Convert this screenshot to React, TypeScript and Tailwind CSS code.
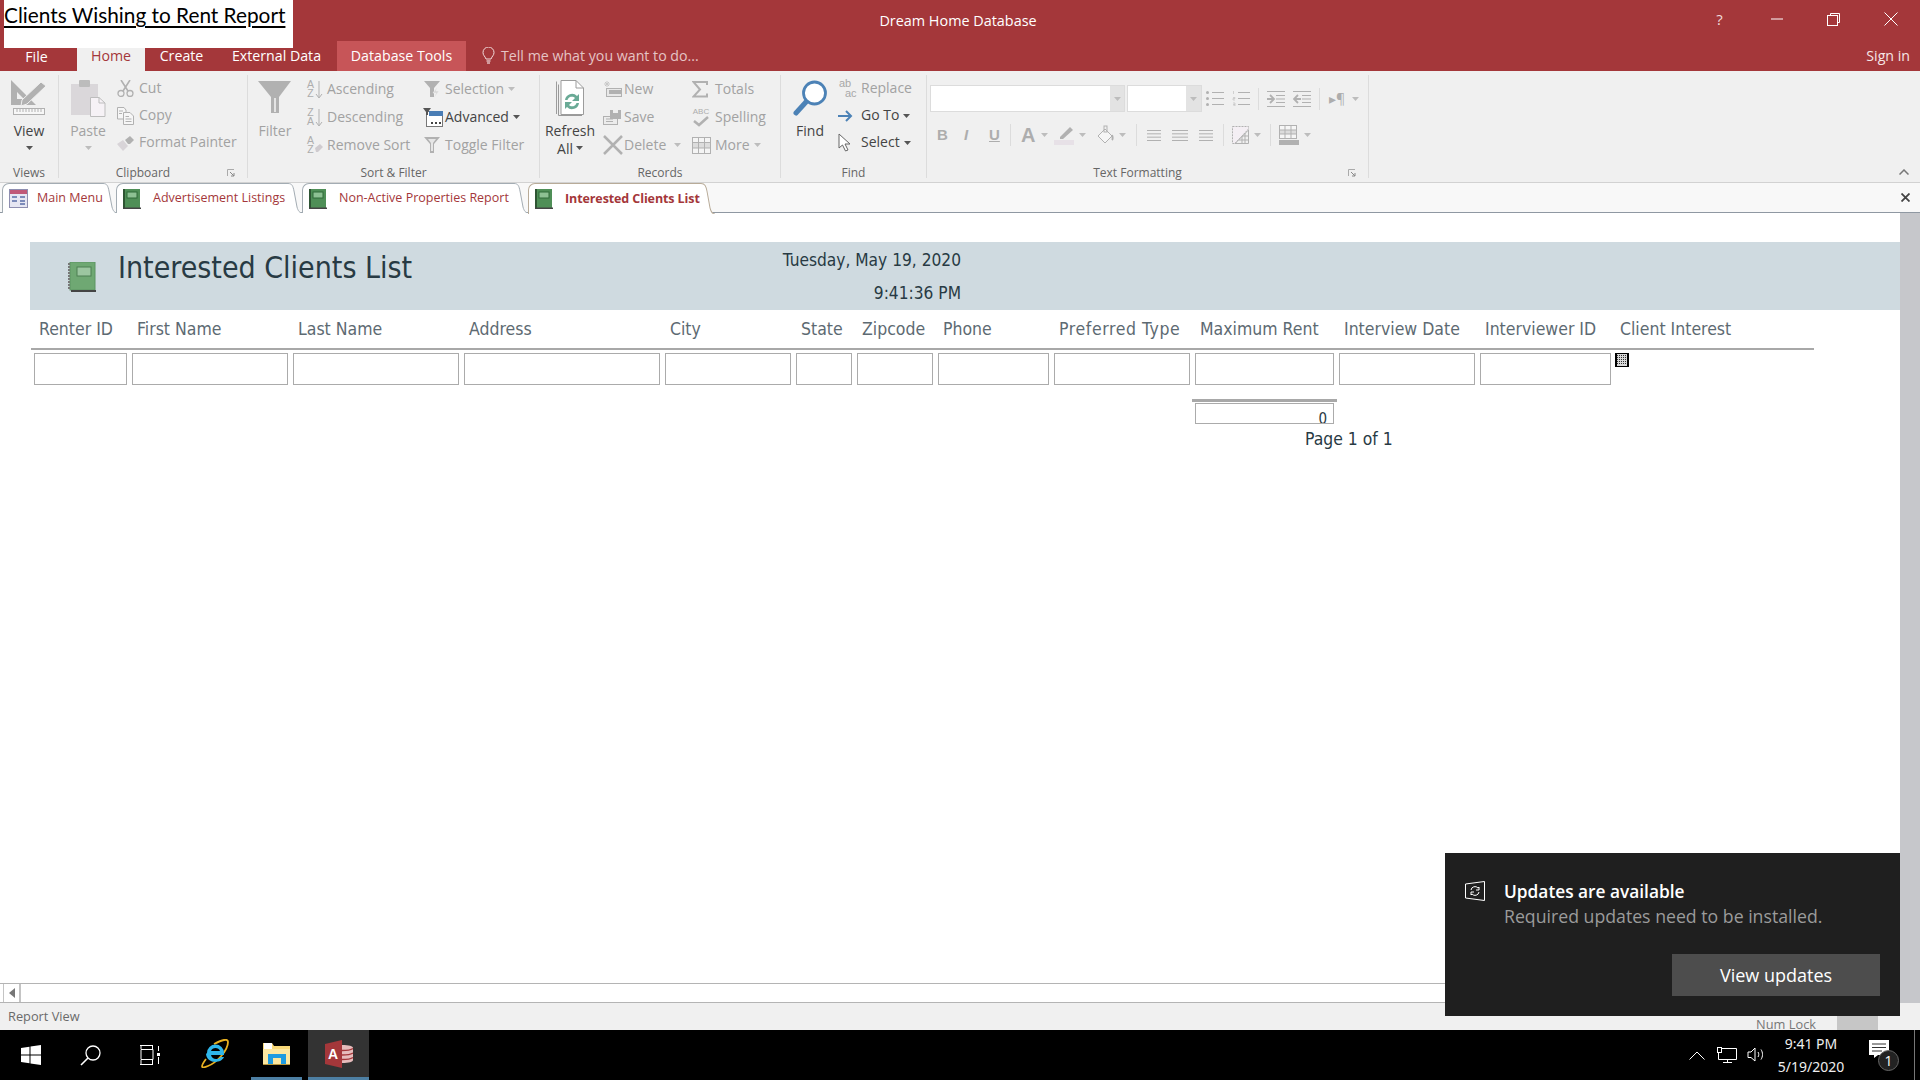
import React from "react";

const UI = "font-['Open_Sans','Noto_Sans',sans-serif]";
const RPT = "font-['DejaVu_Sans_Condensed','DejaVu_Sans',sans-serif]";
const G = "#b1b1b1";

type SP = { w: number; h: number; children: React.ReactNode; cls?: string };
const Svg = ({ w, h, children, cls }: SP) => (
  <svg width={w} height={h} viewBox={`0 0 ${w} ${h}`} fill="none" className={cls ?? "block shrink-0"}>
    {children}
  </svg>
);

const Caret = ({ dark, cls }: { dark?: boolean; cls?: string }) => (
  <Svg w={7} h={4} cls={cls ?? "block shrink-0"}>
    <path d="M0 0H7L3.500 4Z" fill={dark ? "#555" : "#bdbdbd"} />
  </Svg>
);

const ViewIcon = () => (
  <Svg w={38} h={38} cls="block shrink-0 -mt-[2px]">
    <path d="M1 2V27H26Z M7 14V21H14Z" fill={G} fillRule="evenodd" />
    <path d="M12 22L31 4L36 8L17 26L11 28Z" fill={G} stroke="#f0f0f0" />
    <rect x="3.500" y="30.500" width="31" height="6" stroke={G} fill="#f7f7f7" />
    <path d="M7 31v3M10 31v3M13 31v3M16 31v3M19 31v3M22 31v3M25 31v3M28 31v3M31 31v3" stroke={G} />
  </Svg>
);
const PasteIcon = () => (
  <Svg w={36} h={38} cls="block shrink-0 -mt-[1px]">
    <rect x="1" y="5" width="27" height="31" fill="#dad7da" />
    <rect x="9" y="1" width="11" height="7" rx="1" fill="#bcbcbc" />
    <path d="M20.500 18.500H29L35 24V37.500H20.500Z" fill="#f6f2f6" stroke="#bdbdbd" />
    <path d="M29 18.500V24H35" stroke="#bdbdbd" />
  </Svg>
);
const FunnelIcon = () => (
  <Svg w={34} h={35}>
    <path d="M0 1H33L21 17V33H13V17Z" fill={G} />
    <path d="M16 18H18V32H16Z" fill="#e4e4e4" />
  </Svg>
);
const Cut = () => (
  <Svg w={17} h={17}>
    <path d="M4 0L11 11M13 0L6 11" stroke={G} strokeWidth="1.600" />
    <circle cx="4" cy="13.500" r="3" stroke={G} strokeWidth="1.300" />
    <circle cx="13" cy="13.500" r="3" stroke={G} strokeWidth="1.300" />
  </Svg>
);
const Copy = () => (
  <Svg w={17} h={18}>
    <path d="M.5.500H7L9 3V12H.5Z" stroke={G} fill="#f6f6f6" />
    <path d="M6.500 5.500H13L16.500 9V17.500H6.500Z" stroke={G} fill="#f6f6f6" />
    <path d="M8.500 9.500H12M8.500 12H14.500M8.500 14.500H14.500M2 4H6M2 6.500H5" stroke={G} />
  </Svg>
);
const Painter = () => (
  <Svg w={18} h={16}>
    <path d="M0 9L6 5L11 11L6 16Z" fill="#d8d4d8" />
    <path d="M8 5L13 1L17 5L13 9L11 9Z" fill={G} />
  </Svg>
);
const AZ = ({ top, bot, arrow = true }: { top: string; bot: string; arrow?: boolean }) => (
  <span className="flex items-center shrink-0">
    <span className="flex flex-col text-[10.5px] leading-[9.5px] text-[#adadad] font-['Liberation_Sans',sans-serif] text-center w-[9px]">
      <span>{top}</span>
      <span>{bot}</span>
    </span>
    {arrow ? (
      <Svg w={8} h={19}>
        <path d="M4 1V17M1 14L4 18L7 14" stroke={G} />
      </Svg>
    ) : (
      <Svg w={8} h={19}>
        <path d="M0 12L5 8L8 11L3 16H1Z" fill="#cfcbcf" />
      </Svg>
    )}
  </span>
);
const SmallFunnel = ({ bolt }: { bolt?: boolean }) => (
  <Svg w={18} h={19}>
    <path d="M1 1H17L11 8V17H7V8Z" fill={G} />
    {bolt ? <path d="M14 7L10 13H13L11 18L16 11H13Z" fill="#d8d8d8" stroke="#f0f0f0" strokeWidth=".5" /> : <path d="M5 3H13L10 7V15H8V7Z" fill="#e6e6e6" />}
  </Svg>
);
const Advanced = () => (
  <Svg w={20} h={19}>
    <rect x="3.500" y="3.500" width="16" height="15" stroke="#777" fill="#fff" />
    <rect x="6" y="3" width="14" height="5" fill="#4a7db5" />
    <path d="M0 0H8L5 4V7H3V4Z" fill="#555" />
    <path d="M8 14h2v2H8zM12 14h2v2h-2zM16 14h2v2h-2z" fill="#444" />
  </Svg>
);
const RefreshIcon = () => (
  <Svg w={30} h={37}>
    <path d="M3.500 4.500V35.500H27" stroke="#999" />
    <path d="M1.500 1.500V34M6 .500H21L28.500 8V34.500H6Z" stroke="#9c9c9c" fill="#fff" />
    <path d="M21 .500V8H28.500" stroke="#9c9c9c" />
    <path d="M10 20A7 7 0 0 1 22 16L24 14V21H17L20 18A4.500 4.500 0 0 0 12.500 20Z" fill="#6aaa96" />
    <path d="M24 23A7 7 0 0 1 12 27L10 29V22H17L14 25A4.500 4.500 0 0 0 21.500 23Z" fill="#6aaa96" />
  </Svg>
);
const NewI = () => (
  <Svg w={19} h={17}>
    <path d="M4 0V6M1 3H7M2 1L6 5M6 1L2 5" stroke="#c8c8c8" />
    <rect x="3.500" y="7.500" width="15" height="8" stroke={G} fill="#e8e8e8" />
    <rect x="6" y="9" width="12" height="4" fill={G} />
  </Svg>
);
const SaveI = () => (
  <Svg w={19} h={17}>
    <rect x=".5" y="7.500" width="14" height="8" stroke={G} fill="#ececec" />
    <path d="M3 10H10M3 12.500H10" stroke={G} />
    <rect x="7" y="1" width="11" height="9" fill={G} />
    <rect x="10" y="1" width="5" height="3" fill="#eee" />
  </Svg>
);
const DeleteI = () => (
  <Svg w={20} h={20}>
    <path d="M1 1L19 19M19 1L1 19" stroke={G} strokeWidth="2.500" />
  </Svg>
);
const SigmaI = () => (
  <Svg w={16} h={17}>
    <path d="M15 4V1H1.500L8 8.500L1.500 15.500H15V12.500" stroke={G} strokeWidth="2" />
  </Svg>
);
const SpellI = () => (
  <span className="flex flex-col items-center shrink-0 w-[18px]">
    <span className="text-[8px] leading-[8px] text-[#adadad] font-['Liberation_Sans',sans-serif]">ABC</span>
    <Svg w={16} h={11}>
      <path d="M1 5L6 9L15 1" stroke={G} strokeWidth="2.500" />
    </Svg>
  </span>
);
const MoreI = () => (
  <Svg w={19} h={17}>
    <rect x=".5" y=".5" width="18" height="16" stroke={G} fill="#f4f4f4" />
    <rect x="1" y="6" width="17" height="5" fill="#dcdcdc" />
    <path d="M1 5.500H18M1 11H18M6.500 1V16M12.500 1V16" stroke={G} />
  </Svg>
);
const FindI = () => (
  <Svg w={35} h={36}>
    <circle cx="21.500" cy="13" r="11" fill="#fff" stroke="#4c82b6" strokeWidth="2.800" />
    <path d="M13 22L3 33" stroke="#4c82b6" strokeWidth="5" strokeLinecap="round" />
  </Svg>
);
const ReplaceI = () => (
  <span className="flex flex-col shrink-0 text-[11px] leading-[9.5px] text-[#a8a8a8] font-['Liberation_Sans',sans-serif]">
    <span className="pl-[1px]">ab</span>
    <span className="pl-[7px]">ac</span>
  </span>
);
const GoToI = () => (
  <Svg w={15} h={12}>
    <path d="M0 6H13M8 1L13 6L8 11" stroke="#4c82b6" strokeWidth="2" />
  </Svg>
);
const CursorI = () => (
  <Svg w={13} h={19}>
    <path d="M1 1V15L4.500 12L7.500 18L10 17L7 11H12Z" fill="#fff" stroke="#666" />
  </Svg>
);

const Lines = ({ w, rows, h }: { w: number; rows: number; h: number }) => (
  <Svg w={w} h={h}>
    {Array.from({ length: rows }).map((_, i) => (
      <path key={i} d={`M0 ${0.5 + (i * (h - 1)) / (rows - 1)}H${w}`} stroke={G} />
    ))}
  </Svg>
);
const Bullets = () => (
  <Svg w={18} h={15}>
    <circle cx="1.500" cy="1.500" r="1.500" fill={G} />
    <circle cx="1.500" cy="7.500" r="1.500" fill={G} />
    <circle cx="1.500" cy="13.500" r="1.500" fill={G} />
    <path d="M6 1.500H18M6 7.500H18M6 13.500H18" stroke={G} />
  </Svg>
);
const Numbers = () => (
  <Svg w={18} h={15}>
    <path d="M1.500 0V3M1 6.500H3V7.500H1V9H3M1 12H3V15H1M1 13.500H3" stroke="#c2c2c2" strokeWidth=".7" />
    <path d="M6 1.500H18M6 7.500H18M6 13.500H18" stroke={G} />
  </Svg>
);
const IndentI = ({ rev }: { rev?: boolean }) => (
  <Svg w={18} h={16}>
    <path d="M0 .5H18M9 4.500H18M9 8H18M9 11.500H18M0 15.500H18" stroke={G} />
    {rev ? <path d="M8 8H2M5 4L1 8L5 12" stroke={G} strokeWidth="1.800" /> : <path d="M0 8H6M3 4L7 8L3 12" stroke={G} strokeWidth="1.800" />}
  </Svg>
);

const Big = ({ icon, label, sub, dark, cls, caret = true }: { icon: React.ReactNode; label: string; sub?: string; dark?: boolean; cls: string; caret?: boolean }) => (
  <div className={`flex flex-col items-center shrink-0 ${cls}`}>
    <div className="h-[36px] mt-[5px] flex items-start justify-center">{icon}</div>
    <div className={`h-[28px] flex items-center text-[14px] whitespace-nowrap ${dark ? "text-[#444]" : "text-[#a2a2a2]"}`}>{label}</div>
    {sub ? (
      <div className="h-[8px] flex items-center gap-[3px] text-[14px] text-[#444]">
        {sub}
        <Caret dark />
      </div>
    ) : caret ? (
      <div className="h-[8px] flex items-center">
        <Caret dark={dark} />
      </div>
    ) : null}
  </div>
);

const Small = ({ icon, label, iw, dark, caret, h = "h-[28px]" }: { icon: React.ReactNode; label: string; iw: string; dark?: boolean; caret?: boolean; h?: string }) => (
  <div className={`flex items-center ${h} text-[14px] whitespace-nowrap ${dark ? "text-[#444]" : "text-[#a2a2a2]"}`}>
    <span className={`${iw} shrink-0 flex items-center`}>{icon}</span>
    <span className="-mt-[2px]">{label}</span>
    {caret && <Caret dark={dark} cls="block shrink-0 ml-[4px]" />}
  </div>
);

const Launcher = () => (
  <span className="w-[20px] shrink-0 flex justify-start">
    <Svg w={8} h={8}>
      <path d="M.5 7V.5H7" stroke="#aaa" />
      <path d="M3 3L7 7M7 4V7H4" stroke="#888" />
    </Svg>
  </span>
);

const Group = ({ w, label, launcher, children }: { w: string; label: string; launcher?: boolean; children: React.ReactNode }) => (
  <div className={`${w} h-[103px] shrink-0 border-r border-[#dcdcdc] flex flex-col`}>
    <div className="h-[92px] flex items-start">{children}</div>
    <div className="h-[11px] flex items-center text-[12px] text-[#666]">
      <span className="flex-1 text-center whitespace-nowrap">{label}</span>
      {launcher && <Launcher />}
    </div>
  </div>
);

const DocTab = ({ label, active, w, first }: { label: string; active?: boolean; w: string; first?: boolean }) => {
  const stroke = active ? "#b8ab98" : "#a3acb3";
  return (
    <div className={`${w} shrink-0 flex items-stretch h-[30px] ${active ? "-mb-[1px] h-[31px] z-10" : ""}`}>
      <div className={`flex-1 flex items-center bg-white border-t border-l rounded-tl-[7px] ${active ? "border-[#b8ab98]" : "border-[#a3acb3]"} ${first ? "pl-[6px]" : "pl-[5px]"}`}>
        {first ? (
          <Svg w={19} h={19}>
            <rect x=".5" y=".5" width="18" height="18" fill="#e6e6f2" stroke="#8e8eb0" />
            <rect x="1" y="1" width="17" height="4" fill="#c05878" />
            <path d="M3 8H8M3 12H8M11 8H16M11 12H16M11 15H16" stroke="#5a6ea8" strokeWidth="1.500" />
          </Svg>
        ) : (
          <Svg w={19} h={20}>
            <rect x="1" y="0" width="17" height="19" fill="#4f8f57" />
            <rect x="1" y="0" width="2" height="19" fill="#2e5533" />
            <rect x="5" y="3" width="10" height="6" fill="#8dc193" stroke="#2f6b39" />
            <rect x="1" y="18.500" width="18" height="1.500" fill="#444" />
          </Svg>
        )}
        <span className={`${first ? "ml-[9px]" : "ml-[12px]"} whitespace-nowrap text-[12.5px] text-[#a4373a] ${active ? "font-bold tracking-[-0.1px]" : ""}`}>{label}</span>
      </div>
      <svg width="14" height="30" viewBox="0 0 14 30" className={`block shrink-0 ${active ? "h-[31px]" : ""}`} preserveAspectRatio="none">
        <path d="M0 0.5C4 0.5 5 3 6 8L9 24C10 28 12 30 14 30H0Z" fill="#fff" />
        <path d="M0 0.5C4 0.5 5 3 6 8L9 24C10 28 12 30 14 30" fill="none" stroke={stroke} />
      </svg>
    </div>
  );
};

const COLS = "grid grid-cols-[93px_156px_166px_196px_126px_56px_76px_111px_136px_139px_136px_131px_auto] gap-x-[5px]";
const heads = ["Renter ID", "First Name", "Last Name", "Address", "City", "State", "Zipcode", "Phone", "Preferred Type", "Maximum Rent", "Interview Date", "Interviewer ID", "Client Interest"];

export default function App() {
  return (
    <div className={`relative w-[1920px] h-[1080px] overflow-hidden flex flex-col bg-white ${UI}`}>
      {/* title + menu tabs */}
      <header className="h-[71px] shrink-0 bg-[#a4373a] text-white flex flex-col">
        <div className="h-[41px] flex items-center">
          <div className="flex-1 text-center text-[14.4px] pr-[4px]">Dream Home Database</div>
          <div className="absolute right-0 top-0 h-[38px] flex items-center">
            <span className="w-[57px] text-center text-[15px] text-[#f0dcdc]">?</span>
            <span className="w-[57px] flex justify-center">
              <Svg w={12} h={2}><path d="M0 1H12" stroke="#fff" /></Svg>
            </span>
            <span className="w-[57px] flex justify-center">
              <Svg w={13} h={13}>
                <path d="M3.500 2.500V.5H12.500V9.500H10.500" stroke="#fff" />
                <rect x=".5" y="2.500" width="10" height="10" stroke="#fff" />
              </Svg>
            </span>
            <span className="w-[58px] flex justify-center">
              <Svg w={14} h={14}><path d="M.5.5L13.500 13.500M13.500.5L.5 13.500" stroke="#fff" /></Svg>
            </span>
          </div>
        </div>
        <nav className="h-[30px] flex items-start text-[14.2px]">
          <div className="w-[73px] h-[30px] flex items-center justify-center pt-[1px]">File</div>
          <div className="ml-[4px] w-[68px] mt-[7px] h-[23px] pb-[8px] flex items-center justify-center bg-[#f0f0f0] text-[#a4373a]">Home</div>
          <div className="w-[73px] h-[30px] flex items-center justify-center pb-[1px]">Create</div>
          <div className="w-[117px] h-[30px] flex items-center justify-center pb-[1px]">External Data</div>
          <div className="ml-[2px] w-[129px] h-[30px] flex items-center justify-center bg-[#c75558] pb-[1px]">Database Tools</div>
          <div className="ml-[16px] h-[30px] flex items-center text-[#e6c4c5] pb-[1px]">
            <Svg w={13} h={17} cls="block shrink-0 mr-[6px]">
              <path d="M4 12C3 9 1 8.500 1 5.500A5.500 5.500 0 0 1 12 5.500C12 8.500 10 9 9 12Z" stroke="#f3dede" />
              <path d="M4.500 14H8.500M5 16H8" stroke="#fff" />
            </Svg>
            Tell me what you want to do...
          </div>
          <div className="ml-auto mr-[10px] h-[30px] flex items-center text-[#f6e6e6] pb-[1px]">Sign in</div>
        </nav>
      </header>

      {/* ribbon */}
      <section className="h-[112px] shrink-0 bg-[#f0f0f0] border-b border-[#d2d2d2] pt-[4px] flex items-start">
        <Group w="w-[59px]" label="Views">
          <Big cls="w-[58px]" dark icon={<ViewIcon />} label="View" />
        </Group>
        <Group w="w-[189px]" label="Clipboard" launcher>
          <Big cls="w-[48px] ml-[5px]" icon={<PasteIcon />} label="Paste" />
          <div className="ml-[5px] flex flex-col">
            <Small h="h-[27px]" iw="w-[22px]" icon={<Cut />} label="Cut" />
            <Small h="h-[27px]" iw="w-[22px]" icon={<Copy />} label="Copy" />
            <Small h="h-[27px]" iw="w-[22px]" icon={<Painter />} label="Format Painter" />
          </div>
        </Group>
        <Group w="w-[292px]" label="Sort & Filter">
          <Big cls="w-[48px] ml-[3px]" caret={false} icon={<FunnelIcon />} label="Filter" />
          <div className="ml-[7px] w-[117px] flex flex-col">
            <Small iw="w-[21px]" icon={<AZ top="A" bot="Z" />} label="Ascending" />
            <Small iw="w-[21px]" icon={<AZ top="Z" bot="A" />} label="Descending" />
            <Small iw="w-[21px]" icon={<AZ top="A" bot="Z" arrow={false} />} label="Remove Sort" />
          </div>
          <div className="flex flex-col">
            <Small iw="w-[22px]" icon={<SmallFunnel bolt />} label="Selection" caret />
            <Small iw="w-[22px]" dark icon={<Advanced />} label="Advanced" caret />
            <Small iw="w-[22px]" icon={<SmallFunnel />} label="Toggle Filter" />
          </div>
        </Group>
        <Group w="w-[241px]" label="Records">
          <Big cls="w-[56px] ml-[2px]" dark icon={<RefreshIcon />} label="Refresh" sub="All" />
          <div className="ml-[5px] w-[89px] flex flex-col">
            <Small iw="w-[21px]" icon={<NewI />} label="New" />
            <Small iw="w-[21px]" icon={<SaveI />} label="Save" />
            <div className="flex items-center">
              <Small iw="w-[21px]" icon={<DeleteI />} label="Delete" />
              <Caret cls="block shrink-0 ml-[8px]" />
            </div>
          </div>
          <div className="flex flex-col">
            <Small iw="w-[23px]" icon={<SigmaI />} label="Totals" />
            <Small iw="w-[23px]" icon={<SpellI />} label="Spelling" />
            <Small iw="w-[23px]" icon={<MoreI />} label="More" caret />
          </div>
        </Group>
        <Group w="w-[146px]" label="Find">
          <Big cls="w-[48px] ml-[5px]" dark caret={false} icon={<FindI />} label="Find" />
          <div className="ml-[4px] flex flex-col">
            <Small h="h-[27px]" iw="w-[23px]" icon={<ReplaceI />} label="Replace" />
            <Small h="h-[27px]" iw="w-[23px]" dark icon={<GoToI />} label="Go To" caret />
            <Small h="h-[27px]" iw="w-[23px]" dark icon={<CursorI />} label="Select" caret />
          </div>
        </Group>
        <Group w="w-[442px]" label="Text Formatting" launcher>
          <div className="flex flex-col pl-[3px] pt-[10px]">
            <div className="flex items-center h-[27px]">
              <div className="w-[195px] h-[27px] bg-white border border-[#dcdcdc] flex justify-end">
                <span className="w-[14px] bg-[#e3e3e3] flex items-center justify-center"><Caret /></span>
              </div>
              <div className="ml-[2px] w-[75px] h-[27px] bg-white border border-[#dcdcdc] flex justify-end">
                <span className="w-[15px] bg-[#e3e3e3] flex items-center justify-center"><Caret /></span>
              </div>
              <div className="ml-[4px]"><Bullets /></div>
              <div className="ml-[8px]"><Numbers /></div>
              <div className="ml-[8px] w-px h-[22px] bg-[#dcdcdc]" />
              <div className="ml-[8px]"><IndentI /></div>
              <div className="ml-[8px]"><IndentI rev /></div>
              <div className="ml-[8px] w-px h-[22px] bg-[#dcdcdc]" />
              <span className="ml-[9px] text-[14px] leading-none text-[#adadad]">▸¶</span>
              <Caret cls="block shrink-0 ml-[7px]" />
            </div>
            <div className="flex items-center h-[24px] mt-[11px] font-['Liberation_Sans',sans-serif] text-[#adadad]">
              <span className="ml-[7px] w-[12px] text-[15px] font-bold">B</span>
              <span className="ml-[15px] w-[10px] text-[15px] font-bold italic">I</span>
              <span className="ml-[15px] w-[12px] text-[15px] font-bold underline">U</span>
              <span className="ml-[9px] w-px h-[22px] bg-[#dcdcdc]" />
              <span className="ml-[10px] w-[14px] text-[20px] font-bold leading-none">A</span>
              <Caret cls="block shrink-0 ml-[6px]" />
              <span className="ml-[6px]">
                <Svg w={20} h={20}>
                  <path d="M6 12L16 2L19 5L9 14H6Z" fill={G} />
                  <rect x="0" y="15" width="20" height="5" fill="#e7e1e7" />
                </Svg>
              </span>
              <Caret cls="block shrink-0 ml-[5px]" />
              <span className="ml-[11px]">
                <Svg w={17} h={20}>
                  <path d="M1 11L8 4L15 11L8 18Z" stroke={G} fill="#f6f6f6" />
                  <path d="M15 10C16 13 16 14 15 15" stroke={G} strokeWidth="2" />
                  <rect x="7" y="1" width="3" height="6" stroke={G} />
                </Svg>
              </span>
              <Caret cls="block shrink-0 ml-[5px]" />
              <span className="ml-[10px] w-px h-[22px] bg-[#dcdcdc]" />
              <span className="ml-[10px]"><Lines w={14} rows={4} h={11} /></span>
              <span className="ml-[11px]"><Lines w={16} rows={4} h={11} /></span>
              <span className="ml-[11px]"><Lines w={14} rows={4} h={11} /></span>
              <span className="ml-[10px] w-px h-[22px] bg-[#dcdcdc]" />
              <span className="ml-[8px]">
                <Svg w={17} h={18}>
                  <path d="M.5.5H16.500V3L3 17.500H.5Z" stroke={G} strokeDasharray="2 1" fill="#f4eff4" />
                  <path d="M16.500 4V17.500H3L16.500 4ZM10 10V17M13 7V17M7 14H17M10 10H17" stroke={G} />
                </Svg>
              </span>
              <Caret cls="block shrink-0 ml-[5px]" />
              <span className="ml-[9px] w-px h-[22px] bg-[#dcdcdc]" />
              <span className="ml-[8px]">
                <Svg w={20} h={20}>
                  <rect x=".5" y=".5" width="17" height="13" stroke={G} fill="#f6f6f6" />
                  <rect x="1" y="5" width="16" height="4" fill="#dcdcdc" />
                  <path d="M6 1V13M12 1V13M1 5H17M1 9H17" stroke={G} />
                  <rect x="0" y="15" width="20" height="5" fill={G} />
                </Svg>
              </span>
              <Caret cls="block shrink-0 ml-[5px]" />
            </div>
          </div>
        </Group>
        <div className="ml-auto mr-[11px] self-end mb-[7px]">
          <Svg w={10} h={6}><path d="M.5 5.500L5 1L9.500 5.500" stroke="#777" strokeWidth="1.500" /></Svg>
        </div>
      </section>

      {/* document tabs */}
      <div className="h-[30px] shrink-0 bg-[#f8f8f8] border-b border-[#8f98a2] flex items-start pl-[2px] pr-[10px] relative">
        <DocTab first w="w-[114px]" label="Main Menu" />
        <DocTab w="w-[186px]" label="Advertisement Listings" />
        <DocTab w="w-[226px]" label="Non-Active Properties Report" />
        <DocTab active w="w-[187px]" label="Interested Clients List" />
        <div className="ml-auto self-center">
          <Svg w={9} h={9}><path d="M.5.5L8.500 8.500M8.500.5L.5 8.500" stroke="#444" strokeWidth="1.800" /></Svg>
        </div>
      </div>

      {/* report body */}
      <div className="flex-1 min-h-0 flex">
        <main className="flex-1 min-w-0 flex flex-col">
          <div className="flex-1 min-h-0 pt-[29px] pl-[30px]">
            <div className={`h-[68px] bg-[#cfdae0] flex text-[#283a44] ${RPT}`}>
              <div className="w-[752px] flex items-start pt-[20px] pl-[38px]">
                <Svg w={28} h={31}>
                  <rect x="2" y="0" width="25" height="28" fill="#6fa873" />
                  <rect x="2" y="0" width="25" height="28" fill="none" stroke="#5c9463" />
                  <path d="M1 1V28" stroke="#777" strokeWidth="2" strokeDasharray="2 1" />
                  <rect x="9" y="5" width="14" height="9" fill="#9cc6a0" stroke="#4c7f52" />
                  <rect x="3" y="28" width="25" height="2" fill="#444" />
                </Svg>
                <span className="ml-[22px] -mt-[17px] text-[30px] whitespace-nowrap">Interested Clients List</span>
              </div>
              <div className="w-[179px] flex flex-col items-end text-[17.2px] leading-[33px] pt-[2px] whitespace-nowrap">
                <span>Tuesday, May 19, 2020</span>
                <span>9:41:36 PM</span>
              </div>
            </div>
            <div className={`w-[1783px] ml-[1px] border-b-2 border-[#a8a8a8] h-[40px] ${RPT}`}>
              <div className={`${COLS} h-[38px] pl-[3px] items-center text-[17.5px] text-[#5d6a72]`}>
                {heads.map((h, i) => (
                  <span key={h} className={`${i === 12 ? "pl-[4px]" : "pl-[5px]"} ${i === 8 ? "tracking-[0.6px]" : ""} whitespace-nowrap`}>{h}</span>
                ))}
              </div>
            </div>
            <div className={`${COLS} pl-[4px] mt-[3px] items-start`}>
              {heads.slice(0, 12).map((h) => (
                <div key={h} className="h-[32px] border border-[#ababab]" />
              ))}
              <Svg w={14} h={14} cls="block shrink-0 -ml-[1px]">
                <rect x="0" y="0" width="14" height="14" fill="#000" />
                <rect x="2" y="1" width="10" height="12" fill="#d8d8d8" />
                <path d="M2 2.500H12M2 4.500H12M2 6.500H12M2 8.500H12M2 10.500H12" stroke="#333" strokeDasharray="1 1" />
              </Svg>
            </div>
            <div className={`ml-[1162px] mt-[14px] w-[145px] ${RPT}`}>
              <div className="h-[3px] bg-[#a8a8a8]" />
              <div className="ml-[3px] mt-[1px] w-[139px] h-[21px] border border-[#ababab] overflow-hidden flex justify-end pr-[6px] text-[15px] leading-[31px] text-[#283a44]">0</div>
            </div>
            <div className={`ml-[1275px] mt-[5px] text-[17.4px] leading-[20px] whitespace-nowrap text-[#283a44] ${RPT}`}>Page 1 of 1</div>
          </div>
          <div className="h-[20px] shrink-0 border-y border-[#b4b4b4] flex items-stretch pl-[3px]">
            <div className="w-[18px] border-r-2 border-l border-[#c4c4c4] flex items-center justify-center">
              <Svg w={6} h={10}><path d="M6 0V10L0 5Z" fill="#777" /></Svg>
            </div>
          </div>
        </main>
        <div className="w-[20px] shrink-0 bg-[#c6c7cb]" />
      </div>

      {/* status bar */}
      <footer className="h-[27px] shrink-0 bg-[#f0f0f0] flex items-center pl-[8px] text-[12.8px] text-[#6a6a6a]">
        <span className="pt-[1px]">Report View</span>
        <span className="ml-auto mr-[21px] translate-y-[8px] text-[#777]">Num Lock</span>
        <div className="w-[41px] h-[14px] self-end bg-[#c6c6c6]" />
        <div className="w-[42px]" />
      </footer>

      {/* taskbar */}
      <div className="h-[50px] shrink-0 bg-black flex items-stretch text-white">
        <div className="w-[61px] flex items-center justify-center">
          <Svg w={20} h={20}>
            <path d="M0 3L8.500 1.800V9.500H0ZM9.500 1.600L20 0V9.500H9.500ZM0 10.500H8.500V18.200L0 17ZM9.500 10.500H20V20L9.500 18.400Z" fill="#fff" />
          </Svg>
        </div>
        <div className="w-[59px] flex items-center justify-center">
          <Svg w={21} h={21}>
            <circle cx="13" cy="8" r="7" stroke="#fff" strokeWidth="1.300" />
            <path d="M8 13L1 20" stroke="#fff" strokeWidth="1.600" />
          </Svg>
        </div>
        <div className="w-[60px] flex items-center justify-center">
          <Svg w={20} h={20}>
            <path d="M0 .5H13M0 19.500H13M1 4.500H13V14.500H1ZM1 1V4M12.500 1V4M1 15V19M12.500 15V19M18.500 1V6M18.500 12V19" stroke="#fff" fill="none" />
            <rect x="17" y="8" width="3" height="3" fill="#fff" />
          </Svg>
        </div>
        <div className="w-[71px] h-[47px] flex items-center justify-start pl-[20px]">
          <Svg w={29} h={29}>
            <path d="M6 20C0 28 1 30 8 27C16 24 28 12 28 3C28 -1 22 1 14 5" stroke="#e8b020" strokeWidth="1.800" />
            <path d="M7 14A8.500 8.500 0 0 1 24 14V16H11C12 21 18 21 21 18H24C21 25 7 25 6 15Z" fill="#2fb6ea" />
            <path d="M11 12H20C19 8 12 8 11 12Z" fill="#000" />
          </Svg>
        </div>
        <div className="w-[51px] flex flex-col">
          <div className="h-[47px] flex items-center justify-center">
            <Svg w={28} h={24}>
              <path d="M0 1H9L11 4H27V23H0Z" fill="#f8d878" />
              <rect x="1" y="1" width="8" height="6" fill="#fff" />
              <path d="M0 7H27V23H0Z" fill="#fce7a0" />
              <path d="M5 12H23V23H18V16H10V23H5Z" fill="#1e9be0" />
              <path d="M0 22.500H27" stroke="#b8963c" />
            </Svg>
          </div>
          <div className="h-[3px] bg-[#4d7fa3]" />
        </div>
        <div className="ml-[6px] w-[61px] bg-[#333] flex flex-col">
          <div className="h-[47px] flex items-center justify-center">
            <Svg w={28} h={28}>
              <path d="M0 4L17 0V28L0 24Z" fill="#a4373a" />
              <path d="M17 5C24 5 28 6 28 8V20C28 22 24 23 17 23Z" fill="#e6bcbc" />
              <path d="M17 10.500C22 10.500 26 10 28 8.500M17 15C22 15 26 14.500 28 13M17 19.500C22 19.500 26 19 28 17.500" stroke="#a4373a" strokeWidth="1.400" />
              <text x="3" y="19" fontSize="14" fontWeight="700" fill="#fff" fontFamily="Liberation Sans, sans-serif">A</text>
            </Svg>
          </div>
          <div className="h-[3px] bg-[#4d7fa3]" />
        </div>
        <div className="ml-auto flex items-center pr-[5px]">
          <Svg w={16} h={9} cls="block shrink-0 mr-[12px]"><path d="M.5 8.500L8 1L15.500 8.500" stroke="#fff" /></Svg>
          <Svg w={20} h={16} cls="block shrink-0 mr-[10px]">
            <path d="M4 1.500H19.500V12.500H1.500V6" stroke="#fff" />
            <rect x=".5" y=".5" width="4" height="5" stroke="#fff" />
            <path d="M10.500 13V15.500M6 15.500H15" stroke="#fff" />
          </Svg>
          <Svg w={20} h={16} cls="block shrink-0 mr-[9px]">
            <path d="M1 5H4L8 1V14L4 10.500H1Z" stroke="#fff" />
            <path d="M11 5C12 6.500 12 8.500 11 10M14 2.500C16 5.500 16 9.500 14 12.500" stroke="#fff" />
          </Svg>
          <div className="w-[70px] flex flex-col items-center text-[14px] leading-[23px] text-[#eee] font-['Noto_Sans',sans-serif]">
            <span>9:41 PM</span>
            <span>5/19/2020</span>
          </div>
          <div className="relative ml-[23px] w-[20px] h-[30px] mr-[25px]">
            <Svg w={20} h={18}>
              <path d="M0 0H20V15H9L5 18V15H0Z" fill="#fff" />
              <path d="M3 4H17M3 7.500H17M3 11H13" stroke="#333" />
            </Svg>
            <span className="absolute left-[9px] top-[10px] w-[21px] h-[21px] rounded-full bg-[#222] border border-[#666] flex items-center justify-center text-[14px] leading-none">1</span>
          </div>
          <div className="w-px h-[50px] bg-[#777]" />
        </div>
      </div>

      {/* overlays */}
      <div className="absolute left-[4px] top-0 w-[289px] h-[48px] bg-white pt-[1px] text-[20.8px] leading-[28px] text-black underline decoration-2 underline-offset-[3px] whitespace-nowrap font-['Lato',sans-serif]">
        Clients Wishing to Rent Report
      </div>

      <div className="absolute left-[1445px] top-[853px] w-[455px] h-[163px] bg-[#1f1f1f] pt-[28px] pl-[20px] pr-[20px] flex flex-col">
        <div className="flex">
          <Svg w={20} h={20} cls="block shrink-0">
            <path d="M.5 3L19.500.5V19.500L.5 17Z" stroke="#fff" />
            <path d="M6 9A4 4 0 0 1 13 7L14 6V9H11M14 11A4 4 0 0 1 7 13L6 14V11H9" stroke="#fff" />
          </Svg>
          <div className="ml-[19px] flex flex-col -mt-[1px]">
            <span className="text-[17.3px] leading-[24px] font-semibold text-white whitespace-nowrap">Updates are available</span>
            <span className="text-[17.7px] leading-[25px] text-[#9b9b9b] whitespace-nowrap">Required updates need to be installed.</span>
          </div>
        </div>
        <div className="ml-auto mt-[25px] w-[208px] h-[42px] bg-[#4d4d4d] flex items-center justify-center text-[18px] text-white">View updates</div>
      </div>
    </div>
  );
}
